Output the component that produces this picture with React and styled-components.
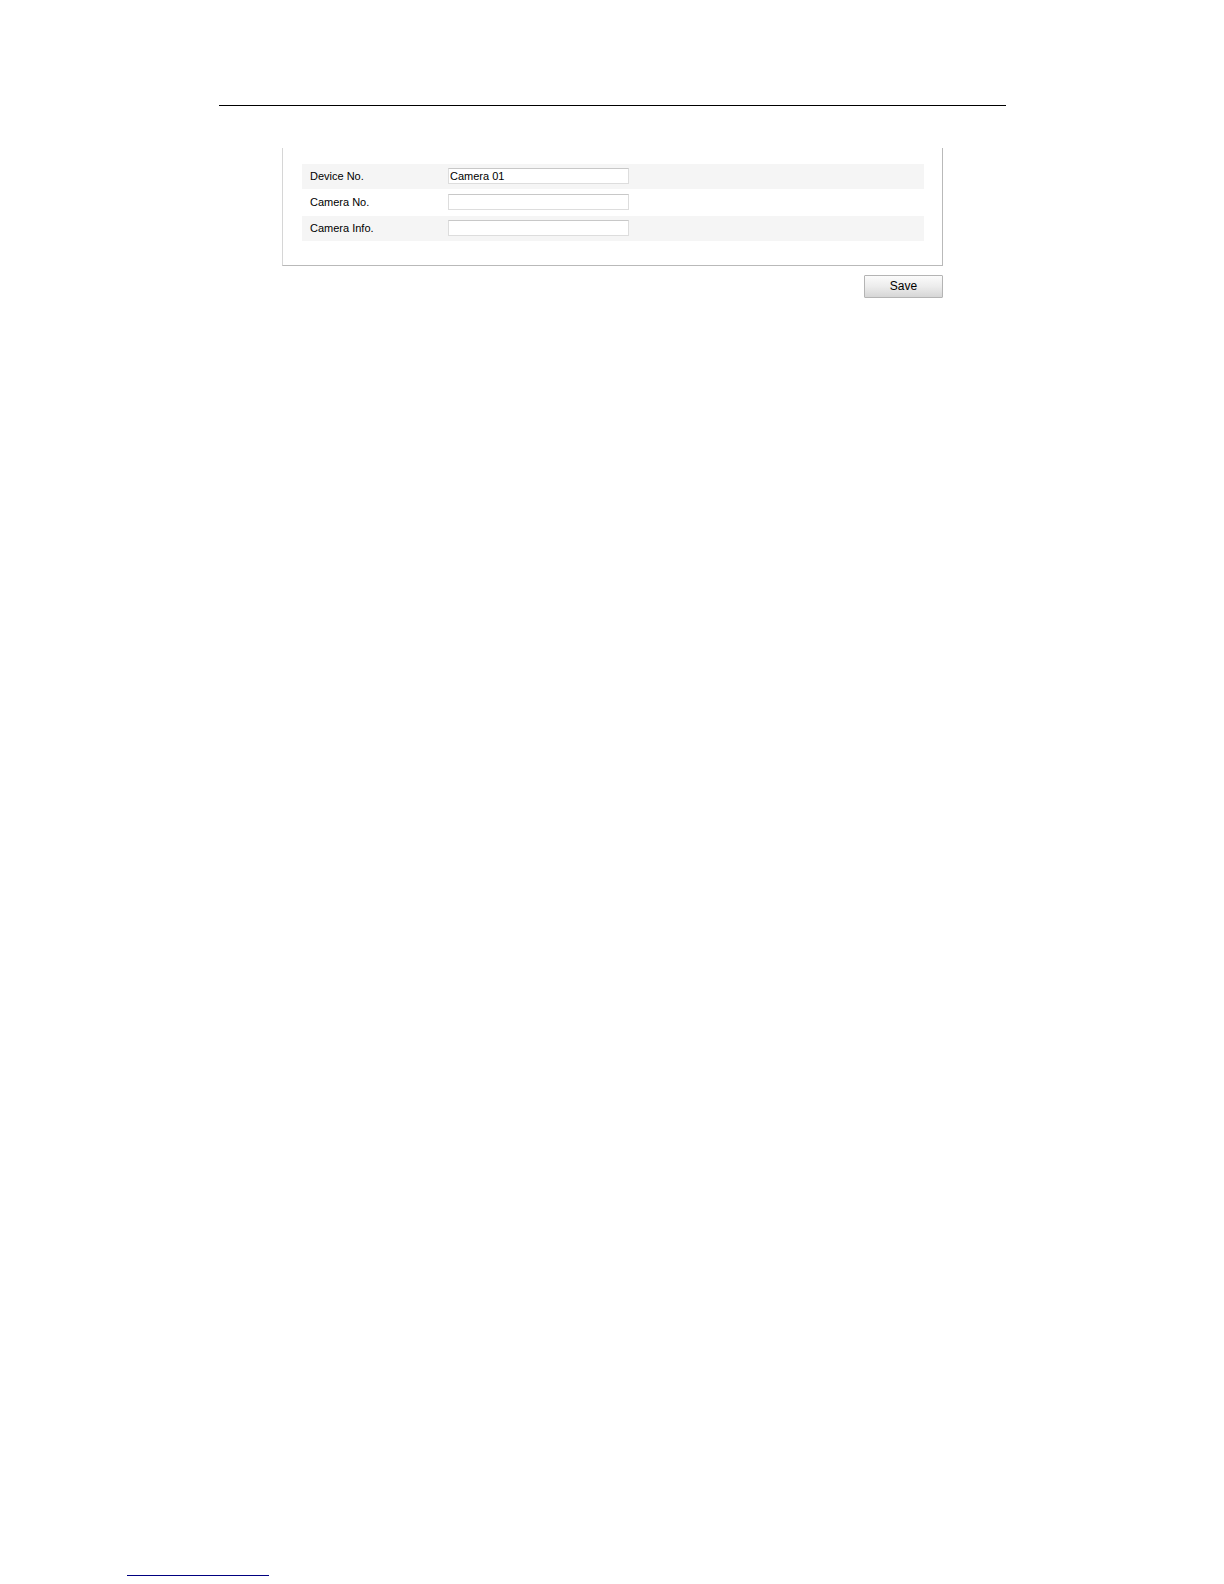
import React from "react";
import styled, { createGlobalStyle } from "styled-components";

const GlobalStyle = createGlobalStyle`
  * {
    box-sizing: border-box;
  }
  body {
    margin: 0;
    background: #ffffff;
    color: #000000;
    font-family: "Liberation Sans", Arial, sans-serif;
  }
`;

const Page = styled.div`
  display: flex;
  flex-direction: column;
  min-height: 100vh;
  padding-bottom: 8px;
`;

const Rule = styled.hr`
  width: 100%;
  height: 1px;
  margin: 0;
  border: 0;
  background: #000000;
`;

const Content = styled.main`
  flex: 1;
  padding: 105px 218px 0 219px;
`;

const SettingsForm = styled.form`
  display: flex;
  flex-direction: column;
  gap: 9px;
  margin: 42px 63px 0;
`;

const Panel = styled.div`
  display: flex;
  flex-direction: column;
  gap: 1px;
  padding: 16px 18px 24px 19px;
  border: solid #b9b9b9;
  border-width: 0 1px 1px;
  border-left-color: #d6d6d6;
`;

const FieldRow = styled.div`
  display: flex;
  align-items: center;
  height: 25px;
  padding: 0 0 1px 8px;
  background: ${({ $shaded }) => ($shaded ? "#f5f5f5" : "#ffffff")};
`;

const Label = styled.label`
  width: 138px;
  font-size: 11px;
  line-height: 16px;
`;

const TextInput = styled.input`
  width: 181px;
  height: 16px;
  padding: 0 1px;
  border: 1px solid #dddddd;
  border-top-color: #c8c8c8;
  border-radius: 0;
  background: #ffffff;
  color: #000000;
  font-family: inherit;
  font-size: 11px;
`;

const SaveButton = styled.button`
  align-self: flex-end;
  width: 79px;
  height: 23px;
  padding: 0 0 2px;
  border: 1px solid #b4b4b4;
  border-radius: 1px;
  background: linear-gradient(#fbfbfb, #ececec 50%, #d6d6d6);
  color: #000000;
  font-family: inherit;
  font-size: 12px;
`;

const FooterRule = styled.hr`
  width: 142px;
  height: 1px;
  margin: 0 0 0 127px;
  border: 0;
  background: #000080;
`;

const fields = [
  { id: "device-no", label: "Device No.", value: "Camera 01" },
  { id: "camera-no", label: "Camera No.", value: "" },
  { id: "camera-info", label: "Camera Info.", value: "" },
];

export default function App() {
  return (
    <>
      <GlobalStyle />
      <Page>
        <Content>
          <Rule />
          <SettingsForm onSubmit={(event) => event.preventDefault()}>
            <Panel>
              {fields.map((field, index) => (
                <FieldRow key={field.id} $shaded={index % 2 === 0}>
                  <Label htmlFor={field.id}>{field.label}</Label>
                  <TextInput id={field.id} type="text" defaultValue={field.value} />
                </FieldRow>
              ))}
            </Panel>
            <SaveButton type="submit">Save</SaveButton>
          </SettingsForm>
        </Content>
        <FooterRule />
      </Page>
    </>
  );
}
